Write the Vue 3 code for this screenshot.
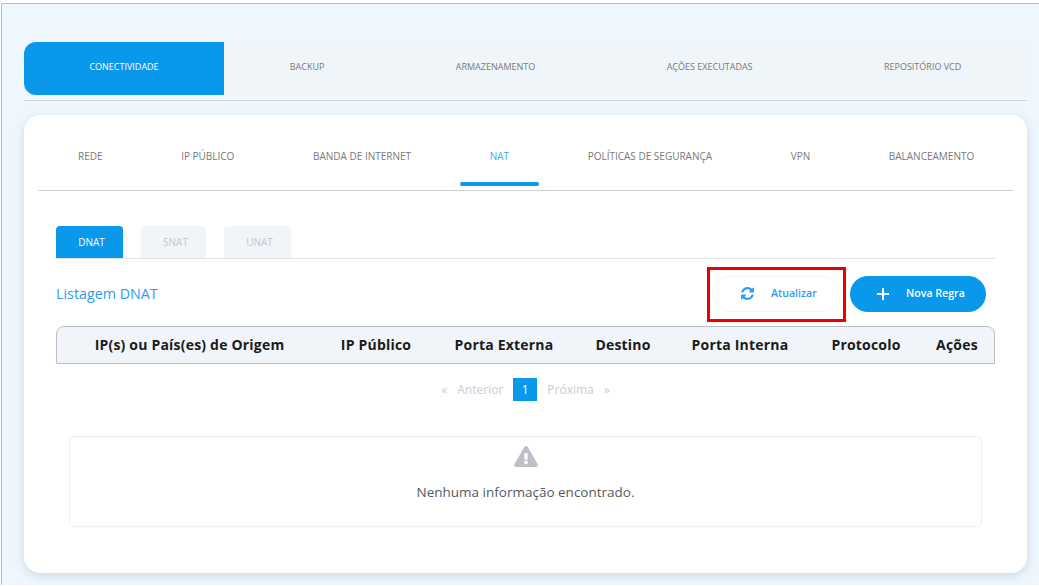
<template>
  <div class="page">
    <div class="top-wrap">
      <nav class="top-tabs">
        <a v-for="(t, i) in topTabs" :key="t" class="top-tab" :class="{ active: i === 0 }">{{ t }}</a>
      </nav>
    </div>

    <section class="card">
      <nav class="inner-tabs">
        <a v-for="t in innerTabs" :key="t" class="inner-tab" :class="{ active: t === 'NAT' }">{{ t }}</a>
      </nav>

      <div class="content">
        <div class="sub-tabs">
          <a v-for="(t, i) in subTabs" :key="t" class="sub-tab" :class="{ active: i === 0 }">{{ t }}</a>
        </div>

        <div class="toolbar">
          <h2 class="title">Listagem DNAT</h2>
          <div class="actions">
            <button class="btn btn-refresh">
              <svg class="ico-sync" viewBox="0 0 1792 1792"><path fill="#2d9cee" d="M1639 1056q0 5-1 7-64 268-268 434.5t-478 166.5q-146 0-282.5-55t-243.5-157l-129 129q-19 19-45 19t-45-19-19-45v-448q0-26 19-45t45-19h448q26 0 45 19t19 45-19 45l-137 137q71 66 161 102t187 36q134 0 250-65t186-179q11-17 53-117 8-23 30-23h192q13 0 22.5 9.5t9.5 22.5zm25-800v448q0 26-19 45t-45 19h-448q-26 0-45-19t-19-45 19-45l138-138q-148-137-349-137-134 0-250 65t-186 179q-11 17-53 117-8 23-30 23h-199q-13 0-22.5-9.5t-9.5-22.5v-7q65-268 270-434.5t480-166.5q146 0 284 55.5t245 156.5l130-129q19-19 45-19t45 19 19 45z"/></svg>
              <span>Atualizar</span>
              <i class="mark"></i>
            </button>
            <button class="btn btn-new">
              <svg class="ico-plus" viewBox="0 0 12 12"><path d="M6 0v12M0 6h12" stroke="#fff" stroke-width="2"/></svg>
              <span>Nova Regra</span>
            </button>
          </div>
        </div>

        <div class="thead">
          <div v-for="c in columns" :key="c" class="th">{{ c }}</div>
        </div>

        <div class="pager">
          <span class="arrow">«</span>
          <span class="pg-text">Anterior</span>
          <span class="pg-num">1</span>
          <span class="pg-text">Próxima</span>
          <span class="arrow">»</span>
        </div>

        <div class="empty">
          <svg class="ico-warn" viewBox="0 0 576 512"><path fill="#bcc0c6" d="M569.517 440.013C587.975 472.007 564.806 512 527.94 512H48.054c-36.937 0-59.999-40.055-41.577-71.987L246.423 23.985c18.467-32.009 64.72-31.951 83.154 0l239.94 416.028zM288 354c-25.405 0-46 20.595-46 46s20.595 46 46 46 46-20.595 46-46-20.595-46-46-46zm-43.673-165.346l7.418 136c.347 6.364 5.609 11.346 11.982 11.346h48.546c6.373 0 11.635-4.982 11.982-11.346l7.418-136c.375-6.874-5.098-12.654-11.982-12.654h-63.383c-6.884 0-12.356 5.78-11.981 12.654z"/></svg>
          <p>Nenhuma informação encontrado.</p>
        </div>
      </div>
    </section>
  </div>
</template>

<script setup>
const topTabs = ['Conectividade', 'Backup', 'Armazenamento', 'Ações Executadas', 'Repositório VCD']
const innerTabs = ['REDE', 'IP PÚBLICO', 'BANDA DE INTERNET', 'NAT', 'POLÍTICAS DE SEGURANÇA', 'VPN', 'BALANCEAMENTO']
const subTabs = ['DNAT', 'SNAT', 'UNAT']
const columns = ['IP(s) ou País(es) de Origem', 'IP Público', 'Porta Externa', 'Destino', 'Porta Interna', 'Protocolo', 'Ações']
</script>

<style>
html, body {
  margin: 0;
  background: #fff;
  overflow: hidden;
}
</style>

<style scoped>
.page {
  box-sizing: border-box;
  height: 582px;
  margin: 3px 0 0 1px;
  padding: 38px 12px 0 22px;
  background: #eef7fe;
  border-top: 1px solid #bcbfc4;
  border-left: 1px solid #bcbfc4;
  font-family: "Open Sans", sans-serif;
}

.top-wrap {
  padding-bottom: 5px;
  border-bottom: 1px solid #ced6e2;
}

.top-tabs {
  display: flex;
  height: 53px;
  background: #f0f5f9;
  border-radius: 12px;
}

.top-tab {
  flex: 1 1 auto;
  padding: 0 65px 4px;
  display: flex;
  align-items: center;
  justify-content: center;
  font-size: 9px;
  text-transform: uppercase;
  color: #77797c;
}

.top-tab.active {
  flex: 0 0 auto;
  box-sizing: border-box;
  width: 200px;
  padding: 0 0 4px;
  background: #0998ea;
  color: #fff;
  border-radius: 12px 0 0 12px;
}

.card {
  height: 458px;
  margin-top: 14px;
  background: #fff;
  border-radius: 16px;
  box-shadow: 0 3px 10px rgba(90, 115, 135, 0.22);
}

.inner-tabs {
  display: flex;
  gap: 18.6px;
  height: 75px;
  margin: 0 14px;
  padding: 0 10px;
  border-bottom: 1px solid #ccd2da;
}

.inner-tab {
  position: relative;
  padding: 34px 30px 0;
  font-size: 10px;
  line-height: 14px;
  color: #77797c;
  white-space: nowrap;
}

.inner-tab.active {
  color: #3fa9f0;
}

.inner-tab.active::after {
  content: "";
  position: absolute;
  left: 0;
  right: 0;
  top: 67px;
  height: 4px;
  background: #0998ea;
  border-radius: 2px;
}

.content {
  padding: 35px 32px 0;
}

.sub-tabs {
  display: flex;
  gap: 18px;
  height: 32px;
  border-bottom: 1px solid #e2e4e8;
}

.sub-tab {
  display: flex;
  align-items: center;
  justify-content: center;
  box-sizing: border-box;
  width: 67px;
  padding-left: 4px;
  background: #f1f4f8;
  color: #c3c7ce;
  font-size: 10px;
  font-weight: 400;
  border-radius: 4px 4px 0 0;
}

.sub-tab:nth-child(2) {
  width: 65px;
}

.sub-tab.active {
  background: #0998ea;
  color: #fff;
}

.toolbar {
  display: flex;
  align-items: center;
  justify-content: space-between;
  height: 36px;
  margin-top: 17px;
  padding-right: 9px;
}

.title {
  margin: 0 0 2px;
  font-size: 14.3px;
  font-weight: 400;
  color: #2d9cee;
}

.actions {
  display: flex;
  gap: 9px;
}

.btn {
  box-sizing: border-box;
  position: relative;
  display: flex;
  align-items: center;
  height: 36px;
  border-radius: 18px;
  font-family: inherit;
  font-size: 10.6px;
  font-weight: 600;
  padding: 0;
}

.btn span {
  margin-bottom: 2px;
}

.btn-refresh {
  width: 129px;
  background: #fff;
  border: 1px solid #f4f5f6;
  color: #2d9cee;
}

.ico-sync {
  width: 15px;
  height: 15px;
  margin-left: 27px;
  margin-right: 16px;
  margin-bottom: 1px;
}

.mark {
  position: absolute;
  top: -10px;
  right: -6px;
  bottom: -11px;
  left: -6px;
  border: 3px solid #ee0000;
}

.btn-new {
  width: 136px;
  background: #0998ea;
  border: 0;
  color: #fff;
}

.ico-plus {
  width: 12px;
  height: 12px;
  margin-left: 27px;
  margin-right: 17px;
}

.thead {
  display: grid;
  grid-template-columns: 265px 108px 148px 90px 144px 108px 74px;
  align-items: center;
  box-sizing: border-box;
  height: 38px;
  margin-top: 14px;
  padding-bottom: 2px;
  background: #f1f4f8;
  border: 1px solid #bcbfc4;
  border-radius: 8px 8px 0 0;
}

.th {
  text-align: center;
  font-size: 14px;
  font-weight: 700;
  letter-spacing: 0.2px;
  color: #1b1b1b;
  white-space: nowrap;
}

.pager {
  display: flex;
  align-items: center;
  justify-content: center;
  height: 23px;
  margin-top: 14px;
  font-size: 12px;
  color: #c9ccd1;
}

.pg-text {
  margin: 0 10px;
}

.pg-num {
  width: 24px;
  height: 23px;
  line-height: 23px;
  text-align: center;
  background: #0998ea;
  color: #fff;
}

.empty {
  box-sizing: border-box;
  height: 91px;
  margin: 35px 13px 0;
  border: 1px solid #eeeeee;
  border-radius: 5px;
  text-align: center;
}

.ico-warn {
  display: block;
  width: 24px;
  height: 21px;
  margin: 9px auto 0;
}

.empty p {
  margin: 15px 0 0;
  font-size: 13.5px;
  line-height: 20px;
  color: #55595f;
}
</style>
